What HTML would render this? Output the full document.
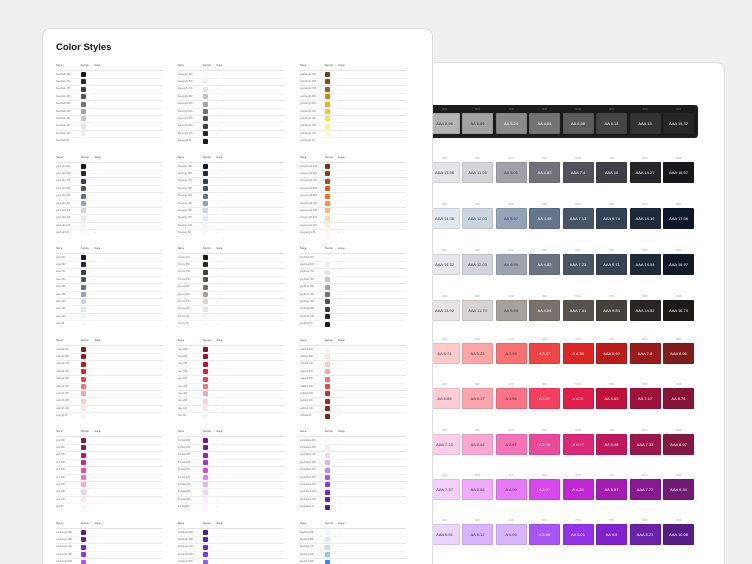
<!DOCTYPE html>
<html><head><meta charset="utf-8"><style>
html,body{margin:0;padding:0;width:752px;height:564px;overflow:hidden;background:#f0f0f0;font-family:"Liberation Sans",sans-serif;position:relative}
.card{position:absolute;background:#fff;border:1px solid #dedede;border-bottom:none;border-radius:8px 8px 0 0;overflow:hidden}
#L{left:42px;top:28px;width:389px;height:536px;z-index:2}
#R{left:380px;top:62px;width:343px;height:502px;z-index:1}
.a{position:absolute}
h1{position:absolute;left:13px;top:13px;margin:0;font-size:9.5px;font-weight:bold;color:#111}
.t{position:absolute;font-size:2.3px;color:#555;white-space:nowrap}
.ln{position:absolute;height:1px;background:#eee}
.sw{position:absolute;width:5px;height:5px;border-radius:1px}
.cs{position:absolute;width:31px;height:21px;border-radius:1px;font-size:4px;display:flex;align-items:center;justify-content:center;box-sizing:border-box;border:1px solid rgba(0,0,0,.08)}
.lb{position:absolute;width:31px;text-align:center;font-size:3px;color:#aaa}
</style></head><body>
<div class="card" id="L"><h1>Color Styles</h1></div>
<div class="card" id="R"></div>
<script>
const P={
neutral:['#171717','#262626','#404040','#525252','#737373','#a3a3a3','#c4c4c4','#e5e5e5','#f0f0f0','#fafafa'],
yellow:['#713f12','#854d0e','#a16207','#ca8a04','#eab308','#facc15','#fde047','#fef08a','#fef9c3','#fefce8'],
gray:['#111827','#1f2937','#374151','#4b5563','#6b7280','#9ca3af','#d1d5db','#e5e7eb','#f3f4f6','#f9fafb'],
blue:['#0f172a','#1e293b','#334155','#475569','#64748b','#94a3b8','#cbd5e1','#e2e8f0','#f1f5f9','#f8fafc'],
orange:['#7c2d12','#9a3412','#c2410c','#ea580c','#f97316','#fb923c','#fdba74','#fed7aa','#ffedd5','#fff7ed'],
stone:['#1c1917','#292524','#44403c','#57534e','#78716c','#a8a29e','#d6d3d1','#e7e5e4','#f5f5f4','#fafaf9'],
red:['#7f1d1d','#991b1b','#b91c1c','#dc2626','#ef4444','#f87171','#fca5a5','#fecaca','#fee2e2','#fef2f2'],
rose:['#881337','#9f1239','#be123c','#e11d48','#f43f5e','#fb7185','#fda4af','#fecdd3','#ffe4e6','#fff1f2'],
pink:['#831843','#9d174d','#be185d','#db2777','#ec4899','#f472b6','#f9a8d4','#fbcfe8','#fce7f3','#fdf2f8'],
fuch:['#701a75','#86198f','#a21caf','#c026d3','#d946ef','#e879f9','#f0abfc','#f5d0fe','#fae8ff','#fdf4ff'],
purple:['#581c87','#6b21a8','#7e22ce','#9333ea','#a855f7','#c084fc','#d8b4fe','#e9d5ff','#f3e8ff','#faf5ff'],
violet:['#4c1d95','#5b21b6','#6d28d9','#7c3aed','#8b5cf6','#a78bfa','#c4b5fd','#ddd6fe','#ede9fe','#f5f3ff'],
sky:['#eff6ff','#dbeafe','#bfdbfe','#93c5fd','#3b82f6','#2563eb','#1d4ed8','#1e40af','#1e3a8a','#172554']
};
const rev=a=>a.slice().reverse();
const blocks=[[P.neutral,rev(P.neutral),P.yellow],[P.gray,P.blue,P.orange],[P.blue,P.stone,rev(P.neutral)],
[P.red,P.rose,rev(P.red)],[P.pink,P.fuch,rev(P.purple)],[P.purple,P.violet,P.sky]];
const names=[['baseDark','baseLight','yellowLight'],['grayLight','blueGray','orangeLight'],['slate','bronze','grayDark'],['redLight','rose','redDark'],['pink','fuchsia','purpleDark'],['purpleLight','violetLight','blueDark']];
const nums=['900','800','700','600','500','400','300','200','100','50'];
const L=document.getElementById('L');let h='';
const hy=[37,129,220,312,403,495],cx=[13,135,257];
blocks.forEach((b,bi)=>b.forEach((cols,ci)=>{
 const x=cx[ci],y=hy[bi];
 h+=`<div class="t" style="left:${x}px;top:${y-1}px">Name</div><div class="t" style="left:${x+25}px;top:${y-1}px">Sample</div><div class="t" style="left:${x+38}px;top:${y-1}px">Usage</div>`;
 h+=`<div class="ln" style="left:${x}px;top:${y+4}px;width:106px;background:#e4e4e4"></div>`;
 cols.forEach((c,i)=>{const ry=y+8.5+i*7.4;
  h+=`<div class="t" style="left:${x}px;top:${ry-1}px;color:#777">${names[bi][ci]}-${nums[i]}</div><div class="sw" style="left:${x+25}px;top:${ry-2.5}px;background:${c}"></div><div class="t" style="left:${x+38}px;top:${ry-1}px;color:#bbb">–</div>`;
  if(i<9)h+=`<div class="ln" style="left:${x}px;top:${ry+3.5}px;width:106px;background:${i%2?'#ececec':'#f6f6f6'}"></div>`;
 });
}));
L.innerHTML+=h;
const R=document.getElementById('R');let r='';
const ox=380,oy=62,xs=[428,461,494.5,528,561.5,595,628.5,662];
const rows=[
[['#b4b4b4','#a3a3a3','#8a8a8a','#737373','#5c5c5c','#454545','#333333','#262626'],['AAA 8.96','AA 6.89','AA 5.24','AA 4.54','AA 6.38','AA 8.14','AAA 13','AAA 15.32'],112],
[['#e4e4e7','#d4d4d8','#a1a1aa','#71717a','#52525b','#3f3f46','#27272a','#18181b'],['AAA 13.96','AAA 11.98','AA 6.01','AA 4.83','AAA 7.4','AAA 10','AAA 14.27','AAA 16.97'],161],
[['#e2e8f0','#cbd5e1','#94a3b8','#64748b','#475569','#334155','#1e293b','#0f172a'],['AAA 14.36','AAA 12.03','AA 6.97','AA 4.48','AAA 7.13','AAA 9.74','AAA 14.16','AAA 17.08'],207],
[['#e5e7eb','#d1d5db','#9ca3af','#6b7280','#4b5563','#374151','#1f2937','#111827'],['AAA 14.32','AAA 12.03','AA 6.99','AA 4.82','AAA 7.23','AAA 9.71','AAA 14.04','AAA 16.97'],253],
[['#e7e5e4','#d6d3d1','#a8a29e','#78716c','#57534e','#44403c','#292524','#1c1917'],['AAA 13.92','AAA 11.74','AA 6.84','AA 4.54','AAA 7.41','AAA 9.83','AAA 14.52','AAA 16.74'],299],
[['#fecaca','#fca5a5','#f87171','#ef4444','#dc2626','#b91c1c','#991b1b','#7f1d1d'],['AA 6.72','AA 5.23','A 3.59','A 3.43','A 4.35','AAA 5.92','AAA 7.8','AAA 8.96'],342],
[['#fecdd3','#fda4af','#fb7185','#f43f5e','#e11d48','#be123c','#9f1239','#881337'],['AA 6.89','AA 5.17','A 3.56','A 3.33','A 4.21','AA 5.63','AA 7.12','AA 8.76'],387],
[['#fbcfe8','#f9a8d4','#f472b6','#ec4899','#db2777','#be185d','#9d174d','#831843'],['AAA 7.13','AA 5.44','A 3.67','A 3.25','A 4.17','AA 5.48','AAA 7.33','AAA 8.97'],433],
[['#f5d0fe','#f0abfc','#e879f9','#d946ef','#c026d3','#a21caf','#86198f','#701a75'],['AAA 7.37','AA 5.66','A 4.09','A 3.21','A 4.24','AA 5.87','AAA 7.77','AAA 9.34'],478],
[['#e9d5ff','#d8b4fe','#d8b4fe','#a855f7','#9333ea','#7e22ce','#6b21a8','#581c87'],['AAA 8.01','AA 6.12','A 4.05','A 3.68','AA 5.01','AA 6.5','AAA 8.21','AAA 10.08'],523]];
const lum=c=>{const n=parseInt(c.slice(1),16);return ((n>>16)*0.3+((n>>8)&255)*0.59+(n&255)*0.11)};
r+=`<div class="a" style="left:${400-ox}px;top:${104-oy}px;width:${697-400}px;height:33px;background:#1c1c1c;border-radius:3px"></div>`;
const lbl=['900','800','700','600','500','400','300','200'],lbl2=['200','300','400','500','600','700','800','900'];
rows.forEach((row,ri)=>{row[0].forEach((c,i)=>{
 const x=xs[i]-ox,y=row[2]-oy;
 r+=`<div class="lb" style="left:${x}px;top:${y-6}px;${ri==0?'color:#777':''}">${ri==0?lbl[i]:lbl2[i]}</div>`;
 r+=`<div class="cs" style="left:${x}px;top:${y}px;background:${c};color:${lum(c)>150?'#333':'#fff'}">${row[1][i]}</div>`;
});});
R.innerHTML=r;
</script>
</body></html>
